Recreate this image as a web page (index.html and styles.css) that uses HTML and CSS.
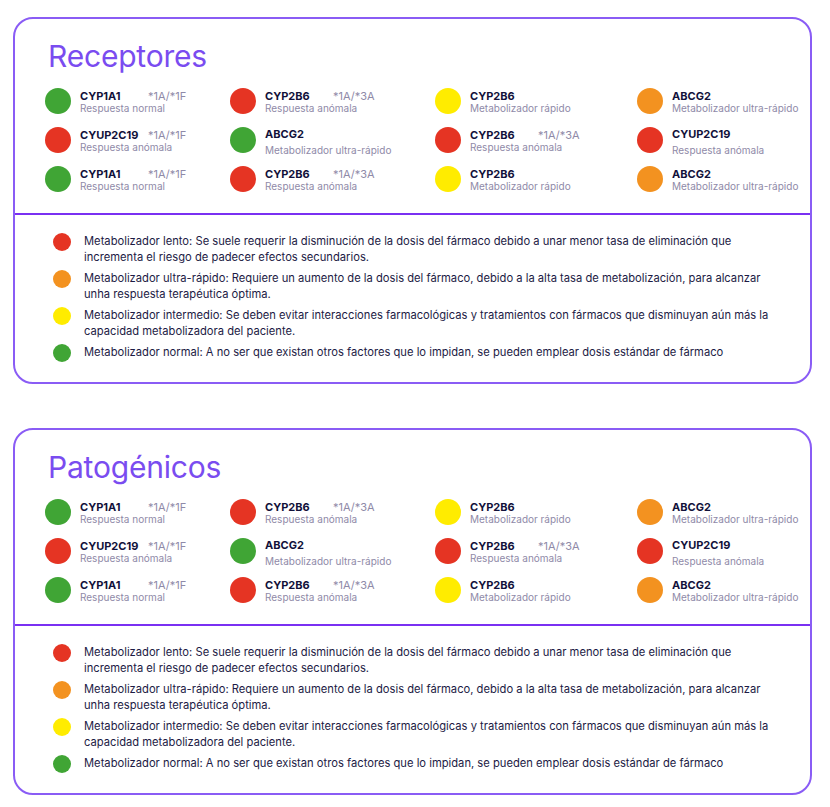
FILE: index.html
```html
<!DOCTYPE html>
<html lang="es">
<head>
<meta charset="utf-8">
<title>Receptores y Patogénicos</title>
<link rel="stylesheet" href="styles.css">
</head>
<body>
<main class="page">

<section class="card">
  <div class="card-top">
    <h2 class="card-title">Receptores</h2>
    <div class="genes">
      <div class="gene"><span class="dot dot-green"></span><div class="gene-text"><div class="gene-line"><span class="gene-name">CYP1A1</span><span class="gene-code">*1A/*1F</span></div><div class="gene-desc">Respuesta normal</div></div></div>
      <div class="gene"><span class="dot dot-red"></span><div class="gene-text"><div class="gene-line"><span class="gene-name">CYP2B6</span><span class="gene-code">*1A/*3A</span></div><div class="gene-desc">Respuesta anómala</div></div></div>
      <div class="gene"><span class="dot dot-yellow"></span><div class="gene-text"><div class="gene-line"><span class="gene-name">CYP2B6</span></div><div class="gene-desc">Metabolizador rápido</div></div></div>
      <div class="gene"><span class="dot dot-orange"></span><div class="gene-text"><div class="gene-line"><span class="gene-name">ABCG2</span></div><div class="gene-desc">Metabolizador ultra-rápido</div></div></div>

      <div class="gene"><span class="dot dot-red"></span><div class="gene-text"><div class="gene-line"><span class="gene-name">CYUP2C19</span><span class="gene-code">*1A/*1F</span></div><div class="gene-desc">Respuesta anómala</div></div></div>
      <div class="gene"><span class="dot dot-green"></span><div class="gene-text gene-text-loose"><div class="gene-line"><span class="gene-name">ABCG2</span></div><div class="gene-desc">Metabolizador ultra-rápido</div></div></div>
      <div class="gene"><span class="dot dot-red"></span><div class="gene-text"><div class="gene-line"><span class="gene-name">CYP2B6</span><span class="gene-code">*1A/*3A</span></div><div class="gene-desc">Respuesta anómala</div></div></div>
      <div class="gene"><span class="dot dot-red"></span><div class="gene-text gene-text-loose"><div class="gene-line"><span class="gene-name">CYUP2C19</span></div><div class="gene-desc">Respuesta anómala</div></div></div>

      <div class="gene"><span class="dot dot-green"></span><div class="gene-text"><div class="gene-line"><span class="gene-name">CYP1A1</span><span class="gene-code">*1A/*1F</span></div><div class="gene-desc">Respuesta normal</div></div></div>
      <div class="gene"><span class="dot dot-red"></span><div class="gene-text"><div class="gene-line"><span class="gene-name">CYP2B6</span><span class="gene-code">*1A/*3A</span></div><div class="gene-desc">Respuesta anómala</div></div></div>
      <div class="gene"><span class="dot dot-yellow"></span><div class="gene-text"><div class="gene-line"><span class="gene-name">CYP2B6</span></div><div class="gene-desc">Metabolizador rápido</div></div></div>
      <div class="gene"><span class="dot dot-orange"></span><div class="gene-text"><div class="gene-line"><span class="gene-name">ABCG2</span></div><div class="gene-desc">Metabolizador ultra-rápido</div></div></div>
    </div>
  </div>
  <ul class="legend">
    <li class="legend-item"><span class="legend-dot dot-red"></span><p class="legend-text">Metabolizador lento: Se suele requerir la disminución de la dosis del fármaco debido a unar menor tasa de eliminación que incrementa el riesgo de padecer efectos secundarios.</p></li>
    <li class="legend-item"><span class="legend-dot dot-orange"></span><p class="legend-text">Metabolizador ultra-rápido: Requiere un aumento de la dosis del fármaco, debido a la alta tasa de metabolización, para alcanzar unha respuesta terapéutica óptima.</p></li>
    <li class="legend-item"><span class="legend-dot dot-yellow"></span><p class="legend-text">Metabolizador intermedio: Se deben evitar interacciones farmacológicas y tratamientos con fármacos que disminuyan aún más la capacidad metabolizadora del paciente.</p></li>
    <li class="legend-item"><span class="legend-dot dot-green"></span><p class="legend-text">Metabolizador normal: A no ser que existan otros factores que lo impidan, se pueden emplear dosis estándar de fármaco</p></li>
  </ul>
</section>

<section class="card">
  <div class="card-top">
    <h2 class="card-title">Patogénicos</h2>
    <div class="genes">
      <div class="gene"><span class="dot dot-green"></span><div class="gene-text"><div class="gene-line"><span class="gene-name">CYP1A1</span><span class="gene-code">*1A/*1F</span></div><div class="gene-desc">Respuesta normal</div></div></div>
      <div class="gene"><span class="dot dot-red"></span><div class="gene-text"><div class="gene-line"><span class="gene-name">CYP2B6</span><span class="gene-code">*1A/*3A</span></div><div class="gene-desc">Respuesta anómala</div></div></div>
      <div class="gene"><span class="dot dot-yellow"></span><div class="gene-text"><div class="gene-line"><span class="gene-name">CYP2B6</span></div><div class="gene-desc">Metabolizador rápido</div></div></div>
      <div class="gene"><span class="dot dot-orange"></span><div class="gene-text"><div class="gene-line"><span class="gene-name">ABCG2</span></div><div class="gene-desc">Metabolizador ultra-rápido</div></div></div>

      <div class="gene"><span class="dot dot-red"></span><div class="gene-text"><div class="gene-line"><span class="gene-name">CYUP2C19</span><span class="gene-code">*1A/*1F</span></div><div class="gene-desc">Respuesta anómala</div></div></div>
      <div class="gene"><span class="dot dot-green"></span><div class="gene-text gene-text-loose"><div class="gene-line"><span class="gene-name">ABCG2</span></div><div class="gene-desc">Metabolizador ultra-rápido</div></div></div>
      <div class="gene"><span class="dot dot-red"></span><div class="gene-text"><div class="gene-line"><span class="gene-name">CYP2B6</span><span class="gene-code">*1A/*3A</span></div><div class="gene-desc">Respuesta anómala</div></div></div>
      <div class="gene"><span class="dot dot-red"></span><div class="gene-text gene-text-loose"><div class="gene-line"><span class="gene-name">CYUP2C19</span></div><div class="gene-desc">Respuesta anómala</div></div></div>

      <div class="gene"><span class="dot dot-green"></span><div class="gene-text"><div class="gene-line"><span class="gene-name">CYP1A1</span><span class="gene-code">*1A/*1F</span></div><div class="gene-desc">Respuesta normal</div></div></div>
      <div class="gene"><span class="dot dot-red"></span><div class="gene-text"><div class="gene-line"><span class="gene-name">CYP2B6</span><span class="gene-code">*1A/*3A</span></div><div class="gene-desc">Respuesta anómala</div></div></div>
      <div class="gene"><span class="dot dot-yellow"></span><div class="gene-text"><div class="gene-line"><span class="gene-name">CYP2B6</span></div><div class="gene-desc">Metabolizador rápido</div></div></div>
      <div class="gene"><span class="dot dot-orange"></span><div class="gene-text"><div class="gene-line"><span class="gene-name">ABCG2</span></div><div class="gene-desc">Metabolizador ultra-rápido</div></div></div>
    </div>
  </div>
  <ul class="legend">
    <li class="legend-item"><span class="legend-dot dot-red"></span><p class="legend-text">Metabolizador lento: Se suele requerir la disminución de la dosis del fármaco debido a unar menor tasa de eliminación que incrementa el riesgo de padecer efectos secundarios.</p></li>
    <li class="legend-item"><span class="legend-dot dot-orange"></span><p class="legend-text">Metabolizador ultra-rápido: Requiere un aumento de la dosis del fármaco, debido a la alta tasa de metabolización, para alcanzar unha respuesta terapéutica óptima.</p></li>
    <li class="legend-item"><span class="legend-dot dot-yellow"></span><p class="legend-text">Metabolizador intermedio: Se deben evitar interacciones farmacológicas y tratamientos con fármacos que disminuyan aún más la capacidad metabolizadora del paciente.</p></li>
    <li class="legend-item"><span class="legend-dot dot-green"></span><p class="legend-text">Metabolizador normal: A no ser que existan otros factores que lo impidan, se pueden emplear dosis estándar de fármaco</p></li>
  </ul>
</section>

</main>
</body>
</html>
```

FILE: styles.css
```css
* {
  box-sizing: border-box;
}

html, body {
  margin: 0;
  padding: 0;
  background: #ffffff;
}

body {
  font-family: Inter, "Noto Sans", "Liberation Sans", sans-serif;
  color: #1b1a42;
}

.page {
  display: flex;
  flex-direction: column;
  gap: 44px;
  padding: 17px 18px 0 13px;
}

.card {
  border: 2px solid #8a5cf5;
  border-radius: 20px;
  overflow: hidden;
}

.card-top {
  padding: 19px 4px 21px 30px;
}

.card-title {
  margin: 0 0 14px 3px;
  font-size: 30px;
  line-height: 36px;
  font-weight: 400;
  color: #7a4cf0;
  letter-spacing: -0.2px;
}

.genes {
  display: grid;
  grid-template-columns: 185px 205px 202px 1fr;
  row-gap: 13px;
}

.gene {
  display: flex;
  align-items: center;
  gap: 9px;
  height: 26px;
  white-space: nowrap;
}

.dot {
  width: 26px;
  height: 26px;
  border-radius: 50%;
  flex-shrink: 0;
}

.dot-green { background: #40a535; }
.dot-red { background: #e53423; }
.dot-yellow { background: #ffec00; }
.dot-orange { background: #f39220; }

.gene-text {
  display: flex;
  flex-direction: column;
  padding-top: 2px;
}

.gene-text-loose {
  gap: 4px;
  padding-top: 4px;
}

.gene-line {
  display: flex;
  align-items: baseline;
  line-height: 12px;
}

.gene-name {
  min-width: 68px;
  font-size: 11px;
  font-weight: 700;
  color: #11113a;
}

.gene-code {
  font-size: 11px;
  color: #8f8aa8;
}

.gene-desc {
  font-size: 10px;
  line-height: 12px;
  color: #8f8aa8;
}

.legend {
  list-style: none;
  margin: 0;
  border-top: 2px solid #7a30f2;
  padding: 18px 35px 20px 38px;
  display: flex;
  flex-direction: column;
  gap: 5px;
}

.legend-item {
  display: flex;
  align-items: flex-start;
  gap: 13px;
}

.legend-dot {
  width: 18px;
  height: 18px;
  border-radius: 50%;
  flex-shrink: 0;
}

.legend-text {
  margin: 0;
  font-size: 11.2px;
  line-height: 16px;
  color: #1d1b45;
}
```
